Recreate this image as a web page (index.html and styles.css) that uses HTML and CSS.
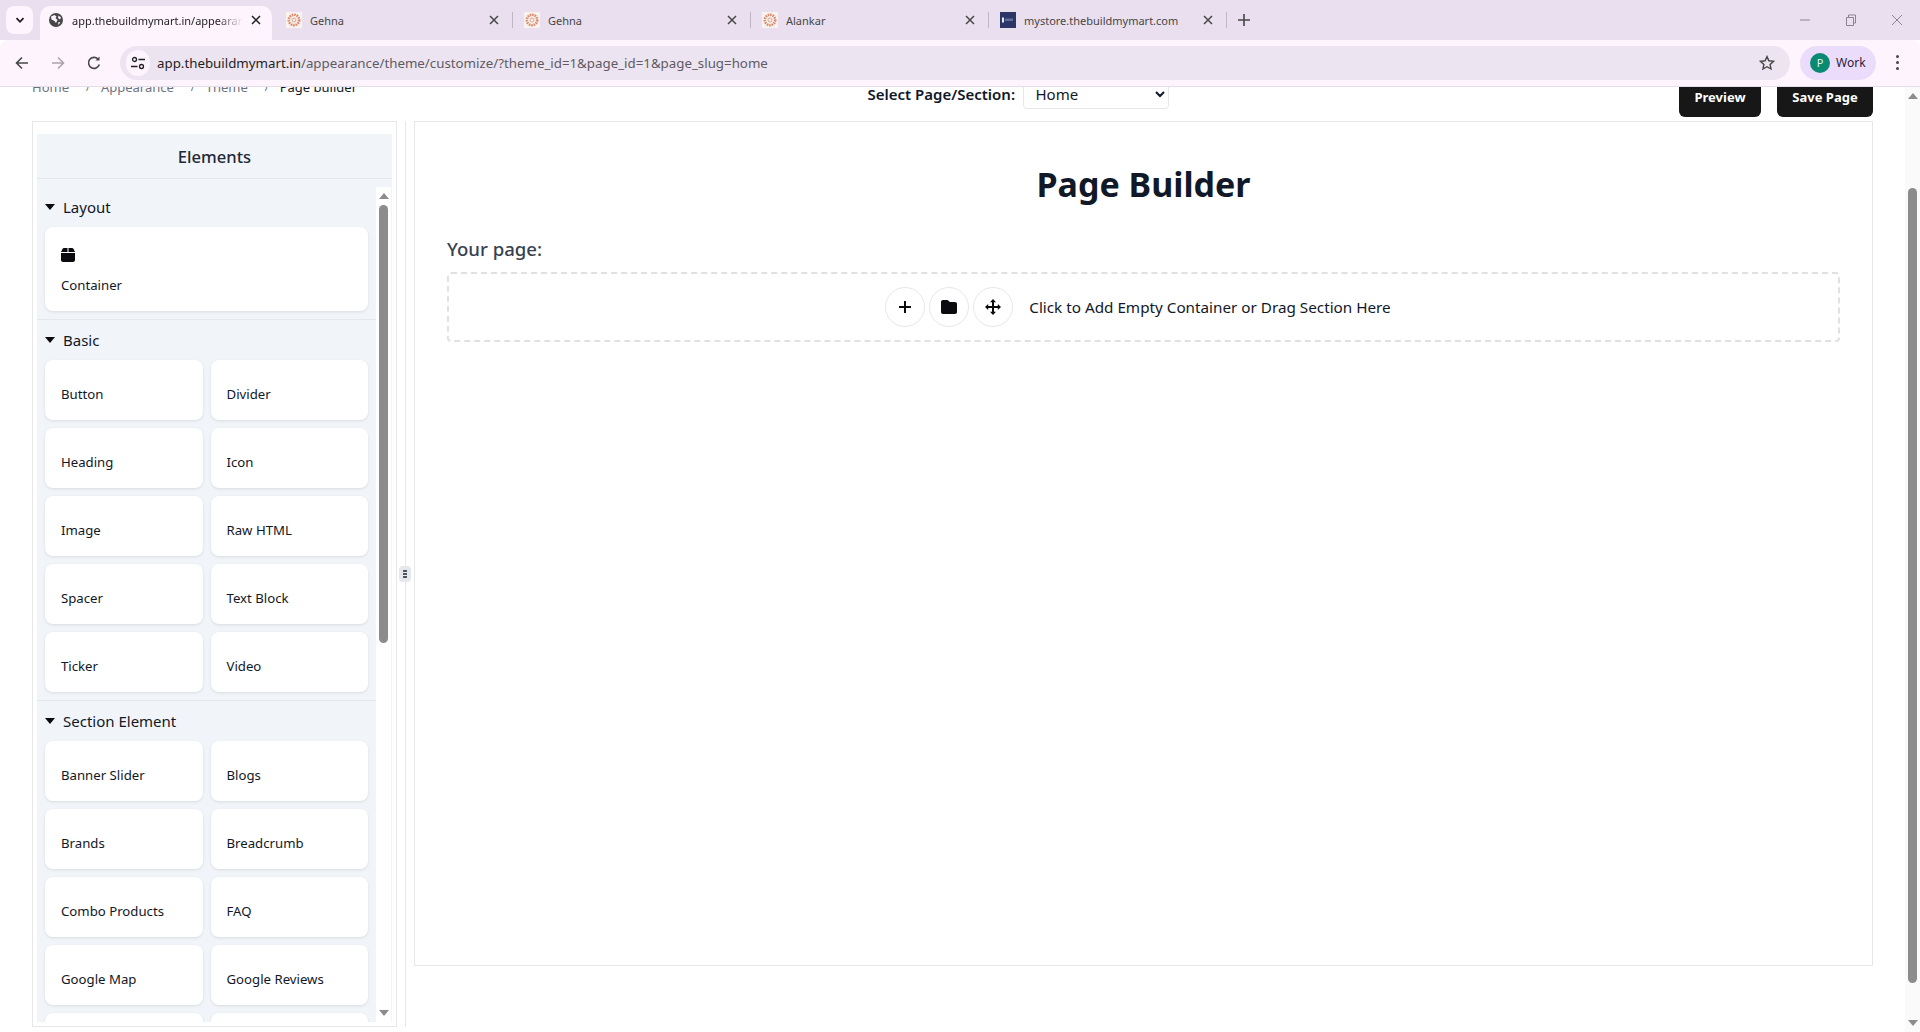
FILE: index.html
```html
<!DOCTYPE html>
<html lang="en">
<head>
    <meta charset="UTF-8">
    <title>Page Builder</title>
    <link rel="stylesheet" href="styles.css">
</head>
<body>
    <!-- browser chrome -->
    <div class="tabstrip">
        <div class="tab-list-btn">
            <svg width="12" height="12" viewBox="0 0 12 12"><path d="M2.5 4.2 6 7.8l3.5-3.6" fill="none" stroke="#1f1f1f" stroke-width="1.8"/></svg>
        </div>
        <div class="tab active">
            <svg class="favicon" viewBox="0 0 16 16"><circle cx="8" cy="8" r="7" fill="#474747"/><path d="M3 4.5 6.5 3l2 1.5-1 1.5 2 2-1.5 3L6.5 9 3.5 7.5zM10.5 3.5l2.5 2-1 2-2-1.5zM10 10.5l2.5-.5-2 3z" fill="#fdf4fe"/></svg>
            <span class="tab-title fade">app.thebuildmymart.in/appearance/theme/customize</span>
            <svg class="tab-close" viewBox="0 0 10 10"><path d="M1 1l8 8M9 1l-8 8" stroke="#1f1f1f" stroke-width="1.5"/></svg>
        </div>
        <div class="tab">
            <svg class="favicon" viewBox="0 0 16 16"><rect width="16" height="16" fill="#f8f3ef"/><circle cx="8" cy="8" r="5.2" fill="none" stroke="#d98a6c" stroke-width="2.6" stroke-dasharray="1.6 .8"/><circle cx="8" cy="8" r="2" fill="none" stroke="#e0a48c" stroke-width="1"/></svg>
            <span class="tab-title">Gehna</span>
            <svg class="tab-close" viewBox="0 0 10 10"><path d="M1 1l8 8M9 1l-8 8" stroke="#474747" stroke-width="1.5"/></svg>
        </div>
        <div class="tab">
            <svg class="favicon" viewBox="0 0 16 16"><rect width="16" height="16" fill="#f8f3ef"/><circle cx="8" cy="8" r="5.2" fill="none" stroke="#d98a6c" stroke-width="2.6" stroke-dasharray="1.6 .8"/><circle cx="8" cy="8" r="2" fill="none" stroke="#e0a48c" stroke-width="1"/></svg>
            <span class="tab-title">Gehna</span>
            <svg class="tab-close" viewBox="0 0 10 10"><path d="M1 1l8 8M9 1l-8 8" stroke="#474747" stroke-width="1.5"/></svg>
        </div>
        <div class="tab">
            <svg class="favicon" viewBox="0 0 16 16"><rect width="16" height="16" fill="#f8f3ef"/><circle cx="8" cy="8" r="5.2" fill="none" stroke="#d98a6c" stroke-width="2.6" stroke-dasharray="1.6 .8"/><circle cx="8" cy="8" r="2" fill="none" stroke="#e0a48c" stroke-width="1"/></svg>
            <span class="tab-title">Alankar</span>
            <svg class="tab-close" viewBox="0 0 10 10"><path d="M1 1l8 8M9 1l-8 8" stroke="#474747" stroke-width="1.5"/></svg>
        </div>
        <div class="tab">
            <svg class="favicon" viewBox="0 0 16 16"><rect width="16" height="16" fill="#2b3566"/><rect x="2" y="5.500" width="2" height="5" fill="#e8ecf5"/><rect x="5" y="6.500" width="8" height="2.500" fill="#5d6e9e"/></svg>
            <span class="tab-title">mystore.thebuildmymart.com</span>
            <svg class="tab-close" viewBox="0 0 10 10"><path d="M1 1l8 8M9 1l-8 8" stroke="#474747" stroke-width="1.5"/></svg>
        </div>
        <div class="new-tab">
            <svg width="14" height="14" viewBox="0 0 14 14"><path d="M7 1v12M1 7h12" stroke="#474747" stroke-width="1.6"/></svg>
        </div>
        <div class="window-controls">
            <div class="win-btn"><svg width="12" height="12" viewBox="0 0 12 12"><path d="M1 6h10" stroke="#8b8590" stroke-width="1"/></svg></div>
            <div class="win-btn"><svg width="12" height="12" viewBox="0 0 12 12"><path d="M1.5 3.5h7v8h-7zM3.5 3.5V1h7v8H8.500" fill="none" stroke="#8b8590" stroke-width="1"/></svg></div>
            <div class="win-btn"><svg width="12" height="12" viewBox="0 0 12 12"><path d="M1 1l10 10M11 1 1 11" stroke="#8b8590" stroke-width="1"/></svg></div>
        </div>
    </div>

    <div class="toolbar">
        <div class="nav-btn"><svg width="16" height="16" viewBox="0 0 16 16"><path d="M14 8H3M8 2.500 2.500 8 8 13.500" fill="none" stroke="#474747" stroke-width="1.6"/></svg></div>
        <div class="nav-btn"><svg width="16" height="16" viewBox="0 0 16 16"><path d="M2 8h11M8 2.500 13.500 8 8 13.500" fill="none" stroke="#a9a4ad" stroke-width="1.6"/></svg></div>
        <div class="nav-btn"><svg width="16" height="16" viewBox="0 0 16 16"><path d="M13.300 9.500A5.500 5.500 0 1 1 12 4" fill="none" stroke="#474747" stroke-width="1.600"/><path d="M13.500 1.500v4h-4z" fill="#474747"/></svg></div>
        <div class="omnibox">
            <div class="site-info">
                <svg width="16" height="16" viewBox="0 0 16 16"><circle cx="4.500" cy="4.500" r="2" fill="none" stroke="#1f1f1f" stroke-width="1.300"/><path d="M8.500 4.500H15M1 11.500h6.500" stroke="#1f1f1f" stroke-width="1.300"/><circle cx="11.500" cy="11.500" r="2" fill="none" stroke="#1f1f1f" stroke-width="1.300"/></svg>
            </div>
            <span class="url"><span class="url-host">app.thebuildmymart.in</span>/appearance/theme/customize/?theme_id=1&amp;page_id=1&amp;page_slug=home</span>
            <svg class="star" width="16" height="16" viewBox="0 0 16 16"><path d="M8 1.600l1.900 4.200 4.600.5-3.400 3.100.9 4.600L8 11.700 4 14l.9-4.600L1.500 6.300l4.600-.5z" fill="none" stroke="#474747" stroke-width="1.400"/></svg>
        </div>
        <div class="profile">
            <span class="avatar">P</span>
            <span class="profile-name">Work</span>
        </div>
        <div class="menu-dots"><i></i><i></i><i></i></div>
    </div>

    <!-- page -->
    <div class="viewport">
        <div class="page">
            <div class="topbar">
                <div class="breadcrumb">
                    <span>Home</span><span class="sep">/</span>
                    <span>Appearance</span><span class="sep">/</span>
                    <span>Theme</span><span class="sep">/</span>
                    <span class="current">Page builder</span>
                </div>
                <div class="page-select">
                    <label for="pageSelect">Select Page/Section:</label>
                    <select id="pageSelect">
                        <option>Home</option>
                    </select>
                </div>
                <div class="actions">
                    <button class="btn btn-preview">Preview</button>
                    <button class="btn btn-save">Save Page</button>
                </div>
            </div>

            <div class="workspace">
                <div class="sidebar">
                    <div class="sidebar-inner">
                        <div class="sidebar-title">Elements</div>
                        <div class="sidebar-body">
                            <div class="element-list">
                                <div class="group">
                                    <div class="group-title"><span class="caret"></span>Layout</div>
                                    <div class="element-grid single">
                                        <div class="element">
                                            <svg class="element-icon" width="14" height="16" viewBox="0 0 448 512"><path d="M50.700 58.500 0 160h208V32H93.700c-18.200 0-34.800 10.300-43 26.500zM240 160h208L397.300 58.500C389.100 42.300 372.500 32 354.300 32H240v128zm208 32H0v224c0 35.300 28.700 64 64 64h320c35.300 0 64-28.700 64-64V192z" fill="#0b0b0f"/></svg>
                                            Container
                                        </div>
                                    </div>
                                </div>
                                <div class="group">
                                    <div class="group-title"><span class="caret"></span>Basic</div>
                                    <div class="element-grid">
                                        <div class="element">Button</div>
                                        <div class="element">Divider</div>
                                        <div class="element">Heading</div>
                                        <div class="element">Icon</div>
                                        <div class="element">Image</div>
                                        <div class="element">Raw HTML</div>
                                        <div class="element">Spacer</div>
                                        <div class="element">Text Block</div>
                                        <div class="element">Ticker</div>
                                        <div class="element">Video</div>
                                    </div>
                                </div>
                                <div class="group">
                                    <div class="group-title"><span class="caret"></span>Section Element</div>
                                    <div class="element-grid">
                                        <div class="element">Banner Slider</div>
                                        <div class="element">Blogs</div>
                                        <div class="element">Brands</div>
                                        <div class="element">Breadcrumb</div>
                                        <div class="element">Combo Products</div>
                                        <div class="element">FAQ</div>
                                        <div class="element">Google Map</div>
                                        <div class="element">Google Reviews</div>
                                        <div class="element"></div>
                                        <div class="element"></div>
                                    </div>
                                </div>
                            </div>
                            <div class="scrollbar small">
                                <div class="arrow-box"><span class="arrow-up"></span></div>
                                <div class="thumb thumb-side"></div>
                                <div class="arrow-box bottom"><span class="arrow-down"></span></div>
                            </div>
                        </div>
                    </div>
                </div>

                <div class="splitter">
                    <div class="handle"><i></i><i></i><i></i></div>
                </div>

                <div class="builder">
                    <h1>Page Builder</h1>
                    <h2>Your page:</h2>
                    <div class="dropzone">
                        <span class="round-btn"><svg width="14" height="14" viewBox="0 0 14 14"><path d="M7 1v12M1 7h12" stroke="#0b0b0f" stroke-width="2"/></svg></span>
                        <span class="round-btn"><svg width="16" height="16" viewBox="0 0 512 512"><path d="M64 480h384c35.300 0 64-28.700 64-64V160c0-35.300-28.700-64-64-64H288c-10.100 0-19.600-4.700-25.600-12.800L243.200 57.600C231.100 41.500 212.100 32 192 32H64C28.700 32 0 60.700 0 96v320c0 35.300 28.700 64 64 64z" fill="#0b0b0f"/></svg></span>
                        <span class="round-btn"><svg width="16" height="16" viewBox="0 0 16 16"><path d="M8 0l3 3.200H9v3.800h3.800V5L16 8l-3.200 3V9H9v3.800h2L8 16l-3-3.200h2V9H3.200v2L0 8l3.200-3v2H7V3.200H5z" fill="#0b0b0f"/></svg></span>
                        <span class="drop-text">Click to Add Empty Container or Drag Section Here</span>
                    </div>
                </div>
            </div>
        </div>
        <div class="scrollbar">
            <div class="arrow-box"><span class="arrow-up"></span></div>
            <div class="thumb thumb-page"></div>
            <div class="arrow-box bottom"><span class="arrow-down"></span></div>
        </div>
    </div>
</body>
</html>
```

FILE: styles.css
```css
* {
    box-sizing: border-box;
}
body {
    margin: 0;
    height: 1032px;
    overflow: hidden;
    display: flex;
    flex-direction: column;
    font-family: "Noto Sans", sans-serif;
    background-color: #ffffff;
    color: #111827;
}

/* browser chrome */
.tabstrip {
    height: 40px;
    display: flex;
    align-items: flex-end;
    padding-left: 6px;
    background-color: #e9dfee;
}
.tab-list-btn {
    width: 27px;
    height: 28px;
    margin-right: 7px;
    margin-bottom: 6px;
    display: flex;
    align-items: center;
    justify-content: center;
    background-color: #fdf4fe;
    border-radius: 8px;
}
.tab {
    position: relative;
    width: 232px;
    height: 34px;
    margin-right: 6px;
    padding: 0 11px 0 8px;
    display: flex;
    align-items: center;
    gap: 8px;
    border-radius: 10px 10px 0 0;
    font-size: 11px;
    color: #474747;
}
.tab::after {
    content: "";
    position: absolute;
    right: -3px;
    top: 6px;
    width: 1px;
    height: 16px;
    background-color: #bfb6c6;
}
.tab.active {
    background-color: #fdf4fe;
    color: #1f1f1f;
}
.tab.active::after {
    display: none;
}
.favicon {
    width: 16px;
    height: 16px;
    flex-shrink: 0;
    margin-top: -6px;
}
.tab-title {
    flex: 1;
    margin-top: -6px;
    white-space: nowrap;
    overflow: hidden;
}
.tab-title.fade {
    -webkit-mask-image: linear-gradient(to right, #000 85%, transparent 100%);
    mask-image: linear-gradient(to right, #000 85%, transparent 100%);
}
.tab-close {
    width: 10px;
    height: 10px;
    flex-shrink: 0;
    margin-top: -6px;
}
.new-tab {
    width: 28px;
    height: 28px;
    margin-bottom: 6px;
    display: flex;
    align-items: center;
    justify-content: center;
}
.window-controls {
    margin-left: auto;
    height: 40px;
    display: flex;
    align-self: flex-start;
}
.win-btn {
    width: 46px;
    height: 40px;
    display: flex;
    align-items: center;
    justify-content: center;
}
.toolbar {
    height: 47px;
    display: flex;
    align-items: center;
    padding: 0 0 1px 4px;
    background-color: #fdf4fe;
    border-bottom: 1px solid #e6dcea;
    border-radius: 8px 8px 0 0;
}
.nav-btn {
    width: 36px;
    height: 34px;
    display: flex;
    align-items: center;
    justify-content: center;
}
.omnibox {
    width: 1670px;
    height: 34px;
    margin-left: 8px;
    padding: 0 15px 0 6px;
    display: flex;
    align-items: center;
    background-color: #ece4f1;
    border-radius: 17px;
}
.site-info {
    width: 24px;
    height: 26px;
    margin-right: 7px;
    display: flex;
    align-items: center;
    justify-content: center;
    background-color: #fdf4fe;
    border-radius: 13px;
}
.url {
    flex: 1;
    font-size: 13.300px;
    color: #5f5b63;
    white-space: nowrap;
}
.url-host {
    color: #1f1f1f;
}
.profile {
    width: 76px;
    height: 34px;
    margin-left: 10px;
    padding-left: 10px;
    display: flex;
    align-items: center;
    gap: 6px;
    background-color: #ecdcfb;
    border-radius: 17px;
}
.avatar {
    width: 20px;
    height: 20px;
    display: flex;
    align-items: center;
    justify-content: center;
    background-color: #0b8a73;
    border-radius: 50%;
    font-size: 11px;
    color: #d9f5ec;
}
.profile-name {
    font-size: 12px;
    color: #2b1a3d;
}
.menu-dots {
    margin-left: 20px;
    display: flex;
    flex-direction: column;
    gap: 3px;
}
.menu-dots i {
    width: 3px;
    height: 3px;
    background-color: #474747;
    border-radius: 50%;
}

/* page */
.viewport {
    flex: 1;
    min-height: 0;
    display: flex;
}
.page {
    flex: 1;
    min-width: 0;
    padding: 0 32px;
    overflow: hidden;
}
.scrollbar {
    width: 15px;
    display: flex;
    flex-direction: column;
    align-items: center;
    background-color: #fafafa;
}
.scrollbar.small {
    background-color: #ffffff;
}
.arrow-box {
    width: 15px;
    height: 18px;
    flex-shrink: 0;
    display: flex;
    align-items: center;
    justify-content: center;
}
.arrow-box.bottom {
    margin-top: auto;
}
.arrow-up {
    border-left: 5px solid transparent;
    border-right: 5px solid transparent;
    border-bottom: 6px solid #8c8c8c;
}
.arrow-down {
    border-left: 5px solid transparent;
    border-right: 5px solid transparent;
    border-top: 6px solid #8c8c8c;
}
.thumb {
    width: 9px;
    background-color: #8c8c8c;
    border-radius: 5px;
}
.thumb-page {
    height: 795px;
    margin-top: 83px;
}
.thumb-side {
    height: 438px;
}

.topbar {
    /* page is scrolled a little, the top of this row sits under the toolbar */
    height: 47px;
    margin-top: -17px;
    margin-bottom: 4px;
    display: flex;
    justify-content: space-between;
    align-items: flex-end;
}
.breadcrumb {
    width: 325px;
    margin-bottom: 20px;
    display: flex;
    font-size: 13px;
    line-height: 20px;
    color: #6b7280;
    white-space: nowrap;
}
.breadcrumb .sep {
    width: 34px;
    padding-left: 6px;
    text-align: center;
    font-size: 11px;
}
.breadcrumb .current {
    color: #111827;
}
.page-select {
    width: 301px;
    margin-bottom: 8px;
    display: flex;
    align-items: center;
    justify-content: space-between;
}
.page-select label {
    font-size: 15px;
    font-weight: 600;
    white-space: nowrap;
}
.page-select select {
    width: 146px;
    height: 30px;
    padding: 0 8px;
    border: 1px solid #e5e7eb;
    border-radius: 4px;
    background-color: #ffffff;
    font-family: inherit;
    font-size: 15px;
    color: #111827;
}
.actions {
    width: 194px;
    display: flex;
    justify-content: space-between;
}
.btn {
    height: 40px;
    padding: 0 0 1px;
    border: 0;
    border-radius: 6px;
    background-color: #171717;
    color: #ffffff;
    font-family: inherit;
    font-size: 13px;
    font-weight: 700;
}
.btn-preview {
    width: 82px;
}
.btn-save {
    width: 96px;
}

.workspace {
    height: 906px;
    display: flex;
}
.sidebar {
    width: 365px;
    padding: 12px 4px 4px;
    border: 1px solid #e5e7eb;
}
.sidebar-inner {
    height: 100%;
    display: flex;
    flex-direction: column;
    background-color: #f1f4f9;
}
.sidebar-title {
    height: 45px;
    flex-shrink: 0;
    display: flex;
    align-items: center;
    justify-content: center;
    border-bottom: 1px solid #e5e7eb;
    font-size: 16.600px;
    font-weight: 500;
    color: #1f2937;
}
.sidebar-body {
    flex: 1;
    min-height: 0;
    padding-top: 8px;
    display: flex;
    overflow: hidden;
}
.element-list {
    width: 339px;
    overflow: hidden;
}
.sidebar-body .scrollbar {
    width: 15px;
}
.group {
    padding: 8px;
    border-bottom: 1px solid #e5e7eb;
}
.group-title {
    height: 24px;
    margin-bottom: 8px;
    display: flex;
    align-items: center;
    font-size: 15px;
    color: #111827;
}
.caret {
    margin-right: 8px;
    border-left: 5px solid transparent;
    border-right: 5px solid transparent;
    border-top: 6px solid #0b0b0f;
}
.element-grid {
    display: grid;
    grid-template-columns: 1fr 1fr;
    gap: 8px;
}
.element-grid.single {
    grid-template-columns: 1fr;
}
.element {
    min-height: 60px;
    padding: 24px 16px 16px;
    background-color: #ffffff;
    border-radius: 8px;
    box-shadow: 0 1px 3px rgba(0, 0, 0, 0.1);
    font-size: 13.200px;
    line-height: 20px;
}
.element-icon {
    display: block;
    margin-top: -4px;
    margin-bottom: 12px;
}

.splitter {
    position: relative;
    width: 17px;
    display: flex;
    align-items: center;
    justify-content: center;
}
.splitter::before {
    content: "";
    position: absolute;
    left: 8px;
    top: 0;
    bottom: 0;
    width: 1px;
    background-color: #e5e7eb;
}
.handle {
    position: relative;
    width: 12px;
    height: 16px;
    margin-right: 1px;
    display: flex;
    flex-direction: column;
    align-items: center;
    justify-content: center;
    gap: 1px;
    background-color: #e5e7eb;
    border-radius: 4px;
}
.handle i {
    width: 4px;
    height: 2px;
    background-color: #4b5563;
}

.builder {
    flex: 1;
    height: 845px;
    padding: 42px 32px 0;
    border: 1px solid #e5e7eb;
}
.builder h1 {
    margin: 0 0 31px;
    text-align: center;
    font-size: 34px;
    line-height: 40px;
    font-weight: 700;
    color: #111827;
}
.builder h2 {
    margin: 0 0 9px;
    font-size: 18.600px;
    line-height: 28px;
    font-weight: 500;
    color: #374151;
}
.dropzone {
    height: 70px;
    padding-right: 11px;
    display: flex;
    align-items: center;
    justify-content: center;
    gap: 4px;
    border: 2px dashed #dfe1e5;
    border-radius: 4px;
}
.round-btn {
    width: 40px;
    height: 40px;
    display: flex;
    align-items: center;
    justify-content: center;
    border: 1px solid #e5e7eb;
    border-radius: 50%;
}
.drop-text {
    margin-left: 12px;
    font-size: 15.250px;
    color: #111827;
}
```
